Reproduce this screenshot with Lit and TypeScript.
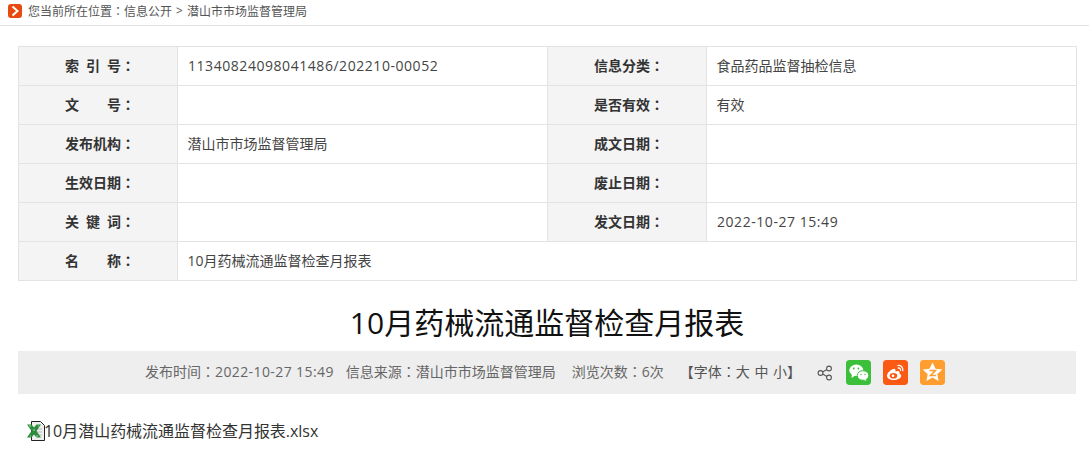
import { LitElement, html, css } from "lit";
import { customElement } from "lit/decorators.js";

const rows: [string, string, string?, string?][] = [
  ["索 引 号：", "11340824098041486/202210-00052", "信息分类：", "食品药品监督抽检信息"],
  ["文　　号：", "", "是否有效：", "有效"],
  ["发布机构：", "潜山市市场监督管理局", "成文日期：", ""],
  ["生效日期：", "", "废止日期：", ""],
  ["关 键 词：", "", "发文日期：", "2022-10-27 15:49"],
  ["名　　称：", "10月药械流通监督检查月报表"],
];

const colon = (s: string) => {
  const i = s.indexOf("：");
  if (i < 0) return s;
  return html`${s.slice(0, i)}<span class="cl">：</span>${s.slice(i + 1)}`;
};
const isNum = (s: string) => /^[\d\/\- :]+$/.test(s);

@customElement("app-root")
export class AppRoot extends LitElement {
  static styles = css`
    :host { display: block; width: 1089px; height: 456px; overflow: hidden; background: #fff; font-family: "Open Sans", "Noto Sans CJK SC", sans-serif; color: #333; }
    .cl { font-family: "Noto Sans CJK TC", sans-serif; }
    .crumb { height: 26px; box-sizing: border-box; border-bottom: 1px solid #e3e3e3; display: flex; align-items: center; padding: 0 0 4px 8px; font-size: 12px; color: #555; }
    .crumb svg { margin-right: 6px; flex: none; }
    .sep { margin: 0 4px; }
    .wrap { padding: 20px 13px 0 18px; }
    table { border-collapse: collapse; table-layout: fixed; width: 1058px; font-size: 14px; }
    td { border: 1px solid #e3e3e3; height: 36px; padding: 0 10px 2px 9.5px; box-sizing: content-box; color: #444; }
    td.n { letter-spacing: 0.55px; padding-left: 10px; }
    td.l { background: #f4f4f4; text-align: center; font-weight: 700; color: #333; padding: 0 0 2px 4px; word-spacing: 3.4px; }
    h1 { margin: 0; padding-top: 18px; height: 52px; line-height: 48px; text-align: center; font-size: 30px; font-weight: 400; color: #111; }
    .meta { height: 43px; background: #eee; display: flex; align-items: center; font-size: 14px; color: #666; padding-left: 127px; }
    .meta span { white-space: nowrap; }
    .meta > span { padding-bottom: 3px; }
    .a { margin-right: 12px; }
    .b { margin-right: 16px; }
    .c { margin-right: 16px; }
    .d { margin-right: 16px; color: #555; word-spacing: 1px; }
    .t { letter-spacing: 0.4px; }
    .share { margin-right: 13px; flex: none; }
    .btn { width: 25px; height: 25px; border-radius: 3px; margin-right: 12px; flex: none; }
    .file { margin-top: 23px; margin-left: 9px; display: flex; align-items: center; font-size: 16px; color: #333; height: 26px; letter-spacing: -0.03px; }
    .file svg { flex: none; margin-right: -1px; }
  `;
  render() {
    return html`
      <div class="crumb">
        <svg width="14" height="14" viewBox="0 0 14 14"><rect width="14" height="14" rx="3" fill="#e8490f"/><path d="M4.500 2.500 9.500 7l-5 4.500" fill="none" stroke="#fff" stroke-width="2"/></svg>
        <span>您当前所在位置<span class="cl">：</span>信息公开</span><span class="sep">&gt;</span><span>潜山市市场监督管理局</span>
      </div>
      <div class="wrap">
        <table>
          <colgroup><col style="width:159px"/><col style="width:370px"/><col style="width:159px"/><col style="width:370px"/></colgroup>
          ${rows.map(r => html`<tr>
            <td class="l">${colon(r[0])}</td>
            ${r.length === 2
              ? html`<td colspan="3">${r[1]}</td>`
              : html`<td class=${isNum(r[1]) ? "n" : ""}>${r[1]}</td><td class="l">${colon(r[2] ?? "")}</td><td class=${isNum(r[3] ?? "") ? "n" : ""}>${r[3]}</td>`}
          </tr>`)}
        </table>
        <h1>10月药械流通监督检查月报表</h1>
        <div class="meta">
          <span class="a">发布时间<span class="cl">：</span><span class="t">2022-10-27 15:49</span></span>
          <span class="b">信息来源<span class="cl">：</span>潜山市市场监督管理局</span>
          <span class="c">浏览次数<span class="cl">：</span>6次</span>
          <span class="d">【字体<span class="cl">：</span>大 中 小】</span>
          <svg class="share" width="16" height="16" viewBox="0 0 16 16" fill="none" stroke="#555" stroke-width="1.100"><circle cx="3.500" cy="8" r="2.400"/><circle cx="12" cy="3.500" r="2.400"/><circle cx="12" cy="12.500" r="2.400"/><path d="M5.600 6.900 9.900 4.600M5.600 9.100l4.300 2.300"/></svg>
          <svg class="btn" viewBox="0 0 25 25"><rect width="25" height="25" rx="3" fill="#3cc03c"/><ellipse cx="10.300" cy="10.300" rx="7" ry="5.800" fill="#fff"/><path d="M6 14 5.500 18l3.800-2.500z" fill="#fff"/><ellipse cx="17" cy="15.500" rx="5.800" ry="4.800" fill="#fff" stroke="#3cc03c"/><path d="M19.500 19l1 2-3-1.300z" fill="#fff"/><circle cx="7.800" cy="8.500" r=".9" fill="#3cc03c"/><circle cx="12.400" cy="8.500" r=".9" fill="#3cc03c"/><circle cx="15" cy="14.500" r=".7" fill="#3cc03c"/><circle cx="19" cy="14.500" r=".7" fill="#3cc03c"/></svg>
          <svg class="btn" viewBox="0 0 25 25"><rect width="25" height="25" rx="3" fill="#fa5a14"/><path d="M10.500 20c-3.600 0-6.500-1.700-6.500-4.200 0-2.900 4.600-7 7-7 1.400 0 1.800 1.200 1.400 2.700 2-.8 4.100-.8 4.100 1 0 .5-.1.800-.3 1.100 1.300.4 2 1.200 2 2.300C18.200 18 14.500 20 10.500 20z" fill="#fff"/><ellipse cx="10.500" cy="15.800" rx="3.800" ry="2.800" fill="#fa5a14"/><circle cx="10" cy="15.800" r="1.300" fill="#fff"/><path d="M15 5.500c2.800-.5 5.500 2 4.800 5.200M15.300 8c1.500-.2 2.500 1 2.200 2.400" fill="none" stroke="#fff" stroke-width="1.300" stroke-linecap="round"/></svg>
          <svg class="btn" viewBox="0 0 25 25"><rect width="25" height="25" rx="3" fill="#ff9d2e"/><path d="M12.500 2.500l3 6.300 6.800.8-5 4.600 1.300 6.800-6.100-3.400-6.100 3.400 1.300-6.800-5-4.600 6.800-.8z" fill="#fff"/><path d="M9.500 10.500h6l-5 5h5.500" fill="none" stroke="#ff9d2e" stroke-width="1.600"/></svg>
        </div>
        <div class="file">
          <svg width="18" height="20" viewBox="0 0 18 20" style="margin-top:1px">
            <path d="M4.500 .5h9l4 4v15h-13z" fill="#efefef" stroke="#222"/>
            <path d="M9 8h6M9 11h6M9 14h6" stroke="#bbb"/>
            <path d="M0 3.500h4.500L7 6.500l2.500-3H14L9.500 10l4.500 6.500H9.500L7 13.500l-2.500 3H0L4.500 10z" fill="#2c8c3c"/>
            <path d="M2 5h2M9 15h2M6 9h2M3 15h1M11 5h1" stroke="#a6dcae"/>
          </svg>10月潜山药械流通监督检查月报表.xlsx
        </div>
      </div>
    `;
  }
}
